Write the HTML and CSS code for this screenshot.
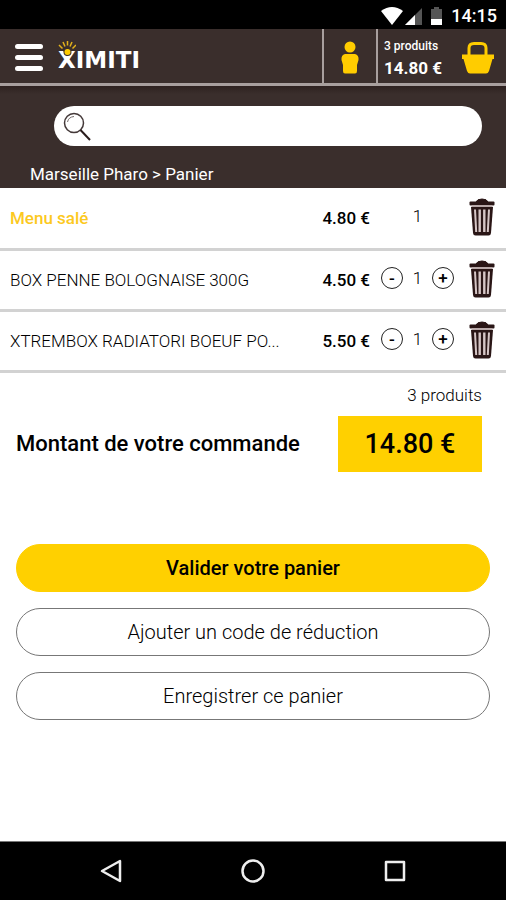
FILE: index.html
```html
<!DOCTYPE html>
<html lang="fr">
<head>
<meta charset="utf-8">
<meta name="viewport" content="width=device-width, initial-scale=1">
<title>Panier</title>
<link rel="stylesheet" href="styles.css">
</head>
<body>
<svg class="sprite" aria-hidden="true">
  <symbol id="trash" viewBox="0 0 26 38">
    <path d="M7 4Q8 1 13 1T19 4" fill="#2a1616" stroke="#2a1616" stroke-width="1"/>
    <rect x="0.500" y="3.500" width="25" height="4" rx="1" fill="#2a1616"/>
    <path d="M2.500 7H23.500V9H2.500Z" fill="#b9a9a9"/>
    <path d="M2 9H24L22 35Q21.800 37.500 19.500 37.500H6.500Q4.200 37.500 4 35Z" fill="#2a1616"/>
    <path d="M6 11.500L7.200 34M18.800 34L20 11.500" stroke="#d6c6c6" stroke-width="2" fill="none"/>
    <path d="M10.700 11.500V34M15.300 11.500V34" stroke="#d6c6c6" stroke-width="2.400" fill="none"/>
  </symbol>
</svg>
<div class="status">
  <svg class="status-icons" viewBox="0 0 62 20" aria-hidden="true">
    <path d="M0 5Q11 -3 22 5L11 19Z" fill="#fff"/>
    <path d="M41 2V19H24Z" fill="#555"/>
    <path d="M34 9V19H24Z" fill="#fff"/>
    <path d="M50 3H53V1H58V3H61V19H50Z" fill="#555"/>
    <path d="M50 13H61V19H50Z" fill="#fff"/>
  </svg>
  <time>14:15</time>
</div>
<header class="bar">
  <button class="menu" aria-label="Menu"><span></span><span></span><span></span></button>
  <a class="logo" href="#">
    <svg class="rays" viewBox="0 0 18 16" aria-hidden="true">
      <path d="M1 4L4.500 7.500M5 1L7 5.500M9.500 0V4.500M14 1L12 5.500M18 4L14.500 7.500" stroke="#e2b21b" stroke-width="1.500"/>
      <circle cx="9.500" cy="11" r="4" fill="#3a2e2c"/>
      <circle cx="9.500" cy="11" r="3" fill="#fc0"/>
    </svg>XIMITI</a>
  <a class="account" href="#" aria-label="Mon compte">
    <svg viewBox="0 0 18 33" aria-hidden="true"><circle cx="9" cy="6" r="5.500" fill="#fc0"/><path d="M4 13H14Q18 14 17.500 19L16 24V30Q16 32.500 14 32.500H4Q2 32.500 2 30V24L.5 19Q0 14 4 13Z" fill="#fc0"/></svg>
  </a>
  <a class="cart" href="#">
    <span class="cart-text"><span class="cart-count">3 produits</span><strong>14.80 €</strong></span>
    <svg viewBox="0 0 34 32" aria-hidden="true"><path d="M8 14V6Q8 1.500 13 1.500H20Q25 1.500 25 6V14" fill="none" stroke="#fc0" stroke-width="3"/><path d="M1 12.500H33V17H31.500L28 29Q27 31.500 25 31.500H9Q7 31.500 6 29L2.500 17H1Z" fill="#fc0"/></svg>
  </a>
</header>
<section class="top">
  <label class="search">
    <svg viewBox="0 0 28 29" aria-hidden="true"><circle cx="11" cy="11" r="9.500" fill="none" stroke="#443939" stroke-width="1.500"/><path d="M4.500 10Q5.500 5 11 4.500" fill="none" stroke="#776d6d"/><path d="M17.500 18L27 28" stroke="#2a1c1c" stroke-width="2"/></svg>
    <input type="search" aria-label="Rechercher">
  </label>
  <nav class="crumb">Marseille Pharo &gt; Panier</nav>
</section>
<main>
  <table class="items">
    <tbody>
      <tr>
        <td class="name featured">Menu salé</td>
        <td class="price">4.80 €</td>
        <td class="qty"><div class="stepper single"><span>1</span></div></td>
        <td class="remove"><button aria-label="Supprimer"><svg><use href="#trash"/></svg></button></td>
      </tr>
      <tr>
        <td class="name">BOX PENNE BOLOGNAISE 300G</td>
        <td class="price">4.50 €</td>
        <td class="qty"><div class="stepper"><button>-</button><span>1</span><button>+</button></div></td>
        <td class="remove"><button aria-label="Supprimer"><svg><use href="#trash"/></svg></button></td>
      </tr>
      <tr>
        <td class="name">XTREMBOX RADIATORI BOEUF PO...</td>
        <td class="price">5.50 €</td>
        <td class="qty"><div class="stepper"><button>-</button><span>1</span><button>+</button></div></td>
        <td class="remove"><button aria-label="Supprimer"><svg><use href="#trash"/></svg></button></td>
      </tr>
    </tbody>
  </table>
  <p class="count">3 produits</p>
  <div class="total"><h1>Montant de votre commande</h1><strong>14.80 €</strong></div>
  <div class="actions">
    <button class="primary">Valider votre panier</button>
    <button>Ajouter un code de réduction</button>
    <button>Enregistrer ce panier</button>
  </div>
</main>
<footer class="system">
  <button aria-label="Retour"><svg viewBox="0 0 24 24"><path d="M21 2V22L3 12Z"/></svg></button>
  <button aria-label="Accueil"><svg viewBox="0 0 24 24"><circle cx="12" cy="12" r="10.500"/></svg></button>
  <button aria-label="Applications"><svg viewBox="0 0 24 24"><rect x="3" y="3" width="18" height="18"/></svg></button>
</footer>
</body>
</html>
```
FILE: styles.css
```css
* { box-sizing: border-box; }
body {
  margin: 0;
  min-height: 100vh;
  display: flex;
  flex-direction: column;
  font-family: Roboto, "Liberation Sans", sans-serif;
  color: #000;
  background: #fff;
}
button { font: inherit; color: inherit; background: none; border: 0; padding: 0; }
a { color: inherit; text-decoration: none; }
svg { display: block; }
.sprite { display: none; }

.status {
  height: 29px;
  padding: 2px 9px 0;
  display: flex;
  align-items: center;
  justify-content: flex-end;
  gap: 8px;
  background: #000;
  color: #fff;
  font-size: 18px;
  font-weight: 500;
}
.status-icons { width: 62px; height: 20px; }

.bar {
  height: 57px;
  display: flex;
  background: #3a2e2c;
  border-bottom: 3px solid #a89f9e;
  color: #fff;
}
.menu {
  width: 58px;
  padding: 2px 15px 0;
  display: flex;
  flex-direction: column;
  justify-content: center;
  gap: 6px;
}
.menu span { height: 5px; border-radius: 3px; background: #fff; }
.logo {
  position: relative;
  margin-right: auto;
  padding-top: 8px;
  align-self: center;
  font: bold 23px "DejaVu Sans", sans-serif;
}
.rays { position: absolute; left: 0; top: 2px; width: 18px; height: 16px; }
.account {
  width: 56px;
  padding-top: 2px;
  display: grid;
  place-items: center;
  border: solid #a89f9e;
  border-width: 0 2px;
}
.account svg { width: 18px; height: 33px; }
.cart {
  width: 128px;
  padding: 3px 11px 0 6px;
  display: flex;
  align-items: center;
  justify-content: space-between;
}
.cart-text { display: grid; gap: 4px; white-space: nowrap; }
.cart-count { font-size: 12px; line-height: 16px; font-weight: 500; }
.cart strong { font-size: 17px; line-height: 20px; }
.cart svg { width: 34px; height: 32px; }

.top {
  height: 102px;
  padding: 20px 24px 0 30px;
  background: linear-gradient(#2e2120, #3a2e2c 8px);
  color: #fff;
}
.search {
  height: 40px;
  margin-left: 24px;
  padding: 0 9px;
  display: flex;
  align-items: center;
  gap: 8px;
  border-radius: 20px;
  background: #fff;
}
.search svg { width: 28px; height: 29px; }
.search input { flex: 1; min-width: 0; border: 0; outline: 0; background: none; font: inherit; }
.crumb { padding-top: 18px; font-size: 17px; line-height: 20px; }

main { flex: 1; }
.items { width: 100%; border-collapse: collapse; table-layout: fixed; }
.items tr { height: 61px; border-bottom: 3px solid #d2d2d2; }
.items td { padding: 0; white-space: nowrap; }
.items .name { padding-left: 10px; font-size: 17px; font-weight: 300; }
.items .featured { color: #fcc91f; font-weight: 500; }
.items .price { width: 70px; text-align: right; font-size: 17px; font-weight: 500; }
.items .qty { width: 92px; padding: 0 8px 4px 11px; }
.stepper {
  height: 22px;
  display: flex;
  align-items: center;
  justify-content: space-between;
  font-size: 17px;
  font-weight: 300;
}
.stepper.single { justify-content: center; }
.stepper button {
  width: 22px;
  height: 22px;
  border: 1px solid #222;
  border-radius: 50%;
  font-weight: 500;
  line-height: 18px;
}
.items .remove { width: 44px; padding: 3px 0 0 7px; }
.remove svg { width: 26px; height: 38px; }

.count { margin: 11px 24px 0; text-align: right; font-size: 17px; line-height: 22px; font-weight: 300; }
.total {
  margin: 10px 24px 0 16px;
  display: flex;
  align-items: center;
  justify-content: space-between;
}
.total h1 { margin: 0; font-size: 22px; font-weight: 500; }
.total strong {
  width: 144px;
  line-height: 56px;
  background: #ffd000;
  text-align: center;
  font-size: 27px;
  font-weight: 500;
}
.actions { margin: 72px 16px 24px; display: grid; gap: 16px; }
.actions button {
  height: 48px;
  border: 1px solid #777;
  border-radius: 24px;
  font-size: 20px;
  font-weight: 300;
}
.actions .primary { background: #ffd000; border-color: #ffd000; font-weight: 500; }

.system {
  height: 59px;
  padding: 0 40px;
  display: grid;
  grid-template-columns: repeat(3, 1fr);
  background: #000;
  border-top: 1px solid #777;
}
.system button { display: grid; place-items: center; }
.system svg { width: 24px; height: 24px; fill: none; stroke: #eee; stroke-width: 2.5; stroke-linejoin: round; }
```
